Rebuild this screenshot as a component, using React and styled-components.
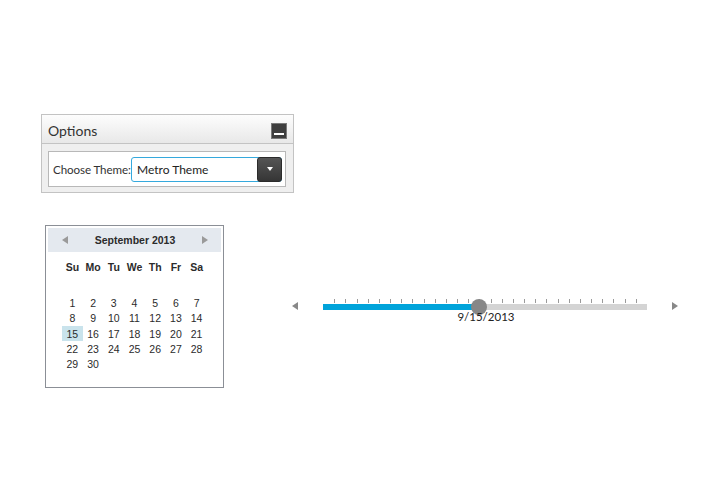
import React from 'react';
import styled, { createGlobalStyle } from 'styled-components';

const Global = createGlobalStyle`
  html, body { margin: 0; padding: 0; background: #fff; }
  body { font-family: Lato, "Liberation Sans", sans-serif; }
`;

const Page = styled.div`
  padding: 114px 0 0 41px;
  display: flex;
  flex-direction: column;
  align-items: flex-start;
`;

const Panel = styled.section`
  width: 253px;
  box-sizing: border-box;
  border: 1px solid #c3c3c3;
  background: #efefef;
`;

const PanelHeader = styled.header`
  height: 28px;
  display: flex;
  align-items: center;
  justify-content: space-between;
  padding: 0 6px;
  border-bottom: 1px solid #c3c3c3;
  background: linear-gradient(#fdfdfd, #e8e8e8);
`;

const Title = styled.h2`
  margin: 2px 0 0;
  font-weight: 400;
  font-size: 14px;
  color: #333;
`;

const MinButton = styled.button`
  position: relative;
  width: 16px;
  height: 16px;
  box-sizing: border-box;
  padding: 0;
  margin-top: 3px;
  border: 1px solid #7a7a7a;
  background: #3e3e3e;
  &::after {
    content: '';
    position: absolute;
    left: 2px;
    top: 9px;
    width: 10px;
    height: 2px;
    background: #fff;
  }
`;

const PanelBody = styled.div`
  padding: 7px 7px 5px 6px;
`;

const ThemeRow = styled.div`
  height: 36px;
  box-sizing: border-box;
  border: 1px solid #b8b8b8;
  background: #fff;
  display: flex;
  align-items: center;
  padding: 0 3px 0 4px;
`;

const Label = styled.span`
  flex-shrink: 0;
  width: 78px;
  white-space: nowrap;
  font-size: 11.6px;
  letter-spacing: -0.1px;
  color: #333;
`;

const Select = styled.div`
  flex: 1;
  height: 25px;
  box-sizing: border-box;
  display: flex;
  align-items: center;
  border: 1px solid #35a9dd;
  border-radius: 3px;
  padding-left: 5px;
  font-size: 12px;
  color: #222;
`;

const DropButton = styled.span`
  align-self: stretch;
  width: 25px;
  margin: -1px -1px -1px auto;
  box-sizing: border-box;
  border: 1px solid #2b2b2b;
  border-radius: 3px;
  background: linear-gradient(#555, #353535);
  display: flex;
  align-items: center;
  justify-content: center;
  &::after {
    content: '';
    width: 0;
    height: 0;
    border-left: 3.5px solid transparent;
    border-right: 3.5px solid transparent;
    border-top: 4px solid #fff;
  }
`;

const Row = styled.div`
  display: flex;
  align-items: flex-start;
  margin-top: 32px;
`;

const Calendar = styled.div`
  width: 179px;
  height: 163px;
  box-sizing: border-box;
  border: 1px solid #8b8f96;
  padding: 2px;
  margin-left: 4px;
  background: #fff;
  font-family: "Liberation Sans", Arial, sans-serif;
  color: #2b2b2b;
`;

const CalHeader = styled.div`
  height: 24px;
  background: #e4e9ef;
  display: flex;
  align-items: center;
  justify-content: space-between;
  padding: 0 13px 0 14px;
`;

const Arrow = styled.span`
  width: 0;
  height: 0;
  border-top: 4.5px solid transparent;
  border-bottom: 4.5px solid transparent;
  ${p => p.$dir === 'left'
    ? `border-right: 6px solid ${p.$color};`
    : `border-left: 6px solid ${p.$color};`}
`;

const MonthTitle = styled.span`
  font-size: 10.5px;
  font-weight: 700;
  color: #2b2b2b;
`;

const DayNames = styled.div`
  width: 145px;
  margin: 5px auto 0;
  height: 20px;
  display: grid;
  grid-template-columns: repeat(7, 1fr);
  align-items: center;
  justify-items: center;
  font-size: 10.5px;
  font-weight: 700;
`;

const Weeks = styled.div`
  width: 145px;
  margin: 3px auto 0;
  display: grid;
  grid-template-columns: repeat(7, 1fr);
  grid-template-rows: repeat(6, 15.3px);
`;

const Day = styled.span`
  display: flex;
  align-items: center;
  justify-content: center;
  font-size: 10.5px;
  color: #2b2b2b;
  background: ${p => (p.$selected ? '#c9e3ec' : 'transparent')};
`;

const SliderWrap = styled.div`
  display: flex;
  align-items: flex-start;
  margin: 69px 0 0 68px;
  height: 32px;
`;

const SliderArrow = styled(Arrow)`
  margin-top: 8px;
`;

const Track = styled.div`
  position: relative;
  width: 324px;
  height: 6px;
  margin: 10px 25px 0;
  background: #d4d4d4;
`;

const Fill = styled.div`
  height: 100%;
  background: #00a3da;
`;

const Tick = styled.span`
  position: absolute;
  top: -5px;
  width: 1px;
  height: 4px;
  background: #9a9a9a;
`;

const Thumb = styled.span`
  position: absolute;
  top: -5px;
  width: 16px;
  height: 16px;
  border-radius: 50%;
  background: #878787;
`;

const ValueLabel = styled.span`
  position: absolute;
  top: 6px;
  white-space: nowrap;
  font-size: 11.5px;
  color: #222;
`;

const dayNames = ['Su', 'Mo', 'Tu', 'We', 'Th', 'Fr', 'Sa'];
const cells = [];
for (let i = 0; i < 42; i++) {
  const d = i - 6;
  cells.push(d >= 1 && d <= 30 ? d : null);
}

const TRACK = 324;
const DAYS = 30;
const step = TRACK / (DAYS - 1);
const value = 15;
const pos = (value - 1) * step;

export default function App() {
  return (
    <>
      <Global />
      <Page>
        <Panel>
          <PanelHeader>
            <Title>Options</Title>
            <MinButton aria-label="Minimize" />
          </PanelHeader>
          <PanelBody>
            <ThemeRow>
              <Label>Choose Theme:</Label>
              <Select>
                Metro Theme
                <DropButton />
              </Select>
            </ThemeRow>
          </PanelBody>
        </Panel>
        <Row>
          <Calendar>
            <CalHeader>
              <Arrow $dir="left" $color="#9a9a9a" />
              <MonthTitle>September 2013</MonthTitle>
              <Arrow $dir="right" $color="#9a9a9a" />
            </CalHeader>
            <DayNames>
              {dayNames.map(n => <span key={n}>{n}</span>)}
            </DayNames>
            <Weeks>
              {cells.map((d, i) => (
                <Day key={i} $selected={d === value}>{d ?? ''}</Day>
              ))}
            </Weeks>
          </Calendar>
          <SliderWrap>
            <SliderArrow $dir="left" $color="#888" />
            <Track>
              <Fill style={{ width: pos }} />
              {Array.from({ length: DAYS - 2 }, (_, i) => (
                <Tick key={i} style={{ left: Math.round((i + 1) * step) }} />
              ))}
              <Thumb style={{ left: pos - 8 }} />
              <ValueLabel style={{ left: pos - 22 }}>9/15/2013</ValueLabel>
            </Track>
            <SliderArrow $dir="right" $color="#888" />
          </SliderWrap>
        </Row>
      </Page>
    </>
  );
}
